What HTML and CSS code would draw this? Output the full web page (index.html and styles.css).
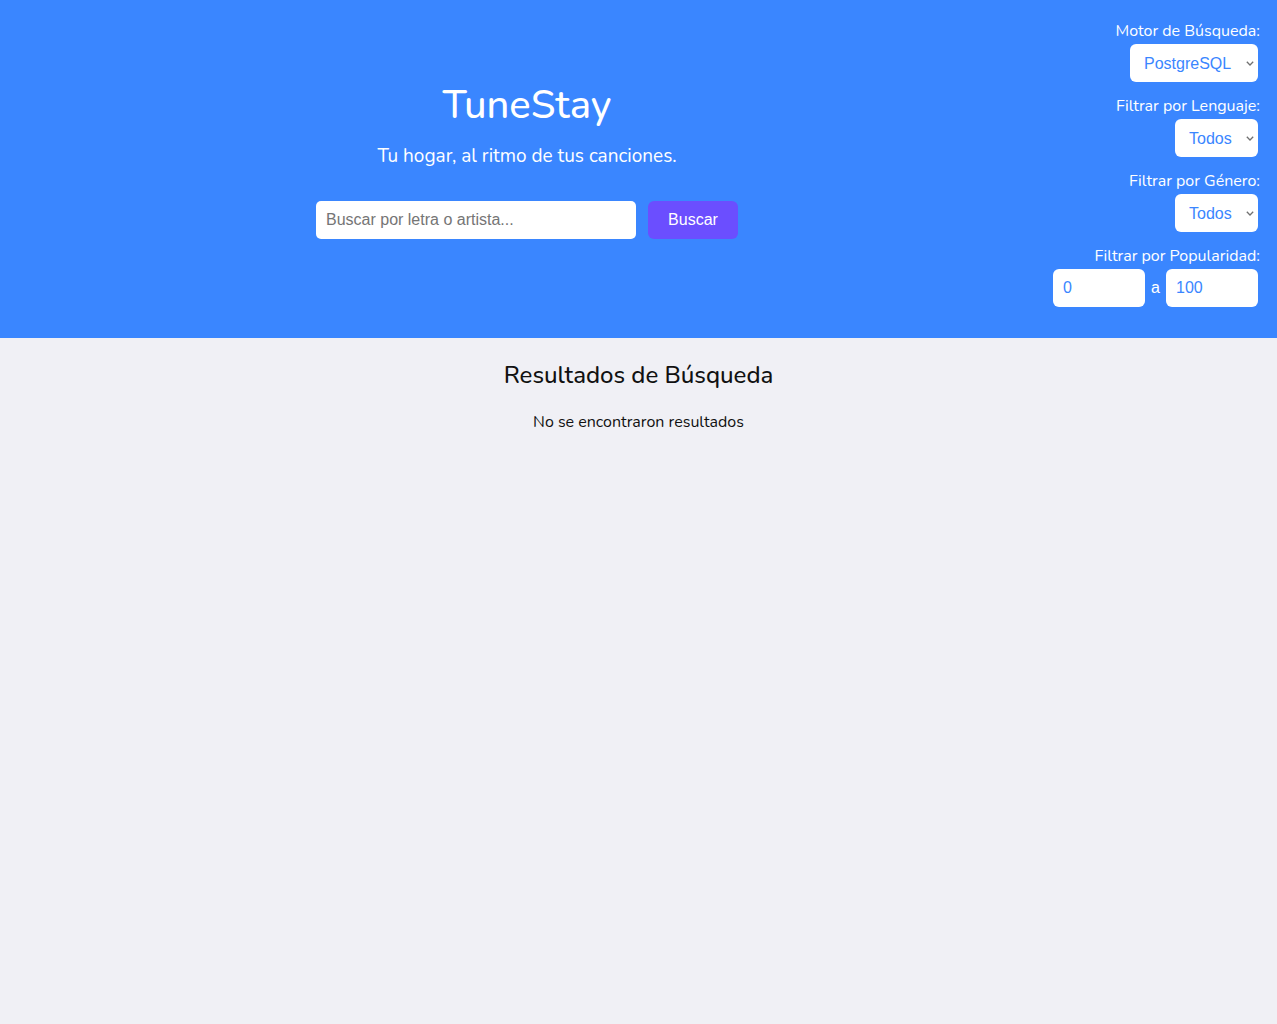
FILE: index.html
```html
<!DOCTYPE html>
<html lang="es">
<head>
<meta charset="utf-8">
<title>TuneStay</title>
<link rel="stylesheet" href="styles.css">
</head>
<body>
<header class="header">
  <div class="hero">
    <h1 class="title">TuneStay</h1>
    <p class="tagline">Tu hogar, al ritmo de tus canciones.</p>
    <form class="search">
      <input class="search-input" type="text" placeholder="Buscar por letra o artista...">
      <button class="search-btn" type="button">Buscar</button>
    </form>
  </div>
  <aside class="filters">
    <div class="filter">
      <label class="filter-label">Motor de Búsqueda:</label>
      <select class="filter-select"><option>PostgreSQL</option></select>
    </div>
    <div class="filter">
      <label class="filter-label">Filtrar por Lenguaje:</label>
      <select class="filter-select"><option>Todos</option></select>
    </div>
    <div class="filter">
      <label class="filter-label">Filtrar por Género:</label>
      <select class="filter-select"><option>Todos</option></select>
    </div>
    <div class="filter">
      <label class="filter-label">Filtrar por Popularidad:</label>
      <div class="range">
        <input class="range-input" type="number" value="0">
        <span class="range-sep">a</span>
        <input class="range-input" type="number" value="100">
      </div>
    </div>
  </aside>
</header>
<main class="results">
  <h2 class="results-title">Resultados de Búsqueda</h2>
  <p class="results-empty">No se encontraron resultados</p>
</main>
</body>
</html>
```
FILE: styles.css
```css
* { box-sizing: border-box; }
html, body { margin: 0; padding: 0; }
body {
  background: #f0f0f5;
  font-family: "Nunito", "Lato", "Noto Sans", sans-serif;
  color: #111;
  min-height: 1024px;
}
.header {
  background: #3a86ff;
  color: #fff;
  display: flex;
  align-items: center;
  height: 338px;
  padding: 21px 19px 20px 0;
}
.hero {
  flex: 1;
  display: flex;
  flex-direction: column;
  align-items: center;
  padding: 0 0 20px 6px;
}
.title {
  margin: 0;
  font-size: 40px;
  font-weight: 500;
  line-height: 48px;
}
.tagline {
  margin: 15px 0 0;
  font-size: 19px;
  line-height: 25px;
}
.search {
  display: flex;
  gap: 12px;
  margin-top: 32px;
}
.search-input {
  width: 320px;
  height: 38px;
  border: none;
  border-radius: 5px;
  padding: 0 10px;
  font-family: "Liberation Sans", Arial, sans-serif;
  font-size: 16px;
  color: #333;
  background: #fff;
}
.search-input::placeholder { color: #757575; }
.search-btn {
  width: 90px;
  height: 38px;
  border: none;
  border-radius: 6px;
  background: #6b4eff;
  color: #fff;
  font-family: "Liberation Sans", Arial, sans-serif;
  font-size: 16px;
}
.filters {
  width: 210px;
  display: flex;
  flex-direction: column;
  align-items: flex-end;
  gap: 14px;
  align-self: flex-start;
}
.filter {
  display: flex;
  flex-direction: column;
  align-items: flex-end;
  gap: 3px;
}
.filter-label {
  font-size: 16px;
  line-height: 20px;
  margin-right: -2px;
}
.filter-select {
  -webkit-appearance: none;
  appearance: none;
  height: 38px;
  border: none;
  border-radius: 6px;
  background: #fff url("data:image/svg+xml,%3Csvg xmlns='http://www.w3.org/2000/svg' width='8' height='5' viewBox='0 0 8 5'%3E%3Cpath d='M0.8 0.8 L4 4 L7.2 0.8' fill='none' stroke='%23707070' stroke-width='1.3'/%3E%3C/svg%3E") no-repeat right 4px center;
  color: #3a86ff;
  font-family: "Liberation Sans", Arial, sans-serif;
  font-size: 16px;
  padding: 0 26px 0 14px;
}
.range {
  display: flex;
  align-items: center;
  gap: 6px;
}
.range-sep {
  font-family: "Liberation Sans", Arial, sans-serif;
  font-size: 16px;
  color: #fff;
}
.range-input {
  width: 92px;
  height: 38px;
  border: none;
  border-radius: 6px;
  background: #fff;
  color: #3a86ff;
  font-family: "Liberation Sans", Arial, sans-serif;
  font-size: 16px;
  padding: 0 10px;
  -moz-appearance: textfield;
}
.range-input::-webkit-inner-spin-button,
.range-input::-webkit-outer-spin-button { -webkit-appearance: none; margin: 0; }
.results {
  text-align: center;
  padding-top: 22px;
}
.results-title {
  margin: 0;
  font-size: 24px;
  font-weight: 500;
  line-height: 30px;
}
.results-empty {
  margin: 21px 0 0;
  font-size: 16px;
}
```
